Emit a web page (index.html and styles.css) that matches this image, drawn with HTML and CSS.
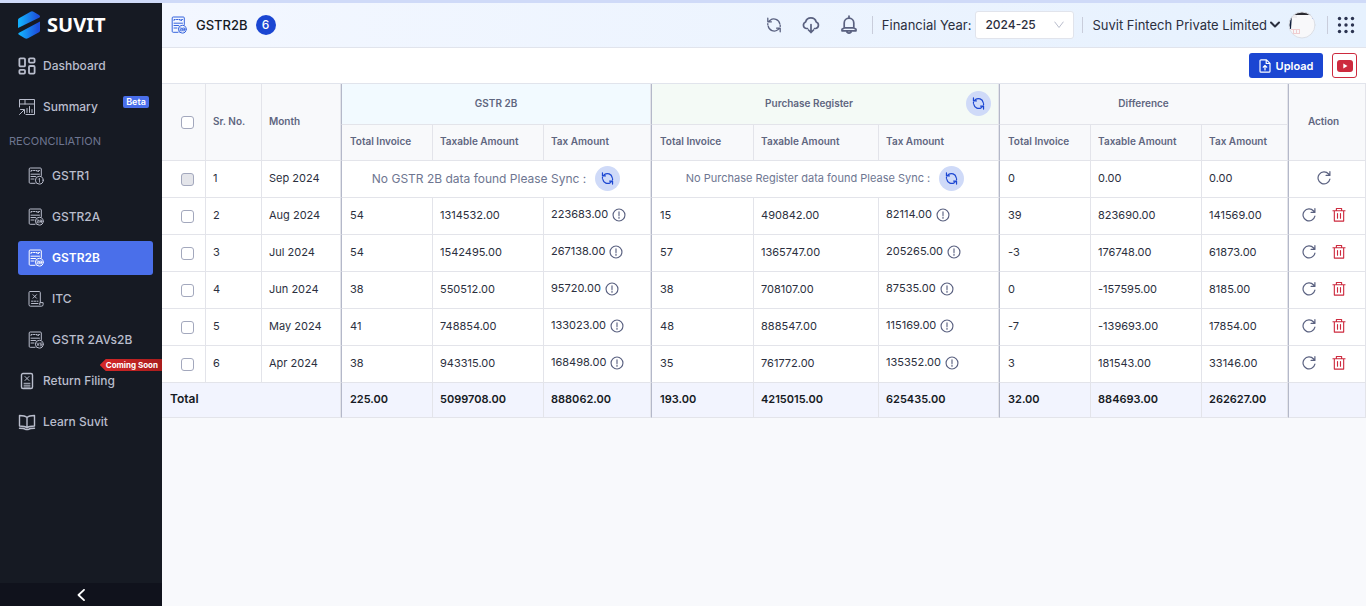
FILE: index.html
```html
<!DOCTYPE html>
<html lang="en">
<head>
  <meta charset="UTF-8">
  <meta name="viewport" content="width=device-width, initial-scale=1">
  <title>GSTR2B</title>
  <link rel="stylesheet" href="styles.css">
</head>
<body>
  <!-- shared icons -->
  <svg class="sprite" aria-hidden="true">
    <symbol id="i-sync" viewBox="0 0 16 16">
      <path d="M2.2 9.2a6 6 0 0 0 9.6 3.6l1.4-1.3M13.8 6.8A6 6 0 0 0 4.2 3.2L2.8 4.5M1.8 1.2v3.6h3.6M14.2 14.8v-3.6h-3.6M1.8 6.6v1.2M14.2 8.2v1.2"/>
    </symbol>
    <symbol id="i-reload" viewBox="1 1 14 14">
      <path d="M13.9 9.2A6 6 0 1 1 12.6 4l1 1.2M13.9 1.6v3.8h-3.8"/>
    </symbol>
    <symbol id="i-trash" viewBox="1 1 14 15">
      <path d="M1.5 4h13M3 4v11h10V4M5.2 4V1.6h5.6V4M6.4 7v5M9.6 7v5"/>
    </symbol>
    <symbol id="i-info" viewBox="0 0 16 16">
      <circle cx="8" cy="8" r="6.8"/>
      <path d="M8 4.4v4.2M8 10.3v1.5"/>
    </symbol>
    <symbol id="i-doc" viewBox="0 0 16 18">
      <path d="M7 16.300H2.200a1 1 0 0 1-1-1V2a1 1 0 0 1 1-1h10.100a1 1 0 0 1 1 1v6.500M3 4.500v-1h1.200M5.500 3.500h1.300M8 3.500h1.200v1M10.500 4.500v-1h1M3 7.200h8.500M3 9.500h4.500M3 12h3"/>
      <circle cx="11.300" cy="13.200" r="3.900"/>
    </symbol>
  </svg>

  <div class="topline"></div>
  <div class="app">
    <aside class="sidebar">
      <a class="logo" href="#">
        <svg width="22" height="28" viewBox="0 0 22 28" aria-hidden="true">
          <defs>
            <linearGradient id="logoFill" x1="0" x2="1">
              <stop offset="0.1" stop-color="#13aefb"/>
              <stop offset="0.9" stop-color="#1d4fdc"/>
            </linearGradient>
          </defs>
          <path fill="url(#logoFill)" d="M0 9q0-1.200 1-1.800L12.500.7q1.500-.8 3 0L21 3.900q1 .6 1 1.500 0 .7-1 1.300L0 17z"/>
          <path fill="url(#logoFill)" d="M22 10.500v9q0 1.200-1 1.800l-11 6q-1.600.9-3.200 0L1 23.700q-1.500-1 0-2z"/>
        </svg>
        <span>SUVIT</span>
      </a>
      <nav class="menu">
        <a class="item" href="#">
          <svg width="18" height="18" viewBox="0 0 18 18" stroke-width="1.8">
            <rect x="1.400" y="1.400" width="5.600" height="8" rx="1"/>
            <rect x="11" y="1.400" width="5.600" height="4.200" rx="1"/>
            <rect x="1.400" y="12.800" width="5.600" height="3.800" rx="1"/>
            <rect x="11" y="9" width="5.600" height="7.600" rx="1"/>
          </svg>
          Dashboard
        </a>
        <a class="item" href="#">
          <svg width="18" height="18" viewBox="0 0 18 18">
            <path d="M1.500 9V1.500h15v15H8M1.500 6h15M7 1.500V6M1.500 16.500 6 12M2.500 11.500H6.500v4M9 14.500v-4M11.500 14.500v-6M14 14.500v-3"/>
          </svg>
          Summary
          <span class="beta">Beta</span>
        </a>
        <h2>RECONCILIATION</h2>
        <a class="item sub" href="#">
          <svg class="doc" width="16" height="18"><use href="#i-doc"/><path d="m10.500 12.200 1-1v4"/></svg>
          GSTR1
        </a>
        <a class="item sub" href="#">
          <svg class="doc" width="16" height="18"><use href="#i-doc"/><path d="M9 12h1.600v1.300H9v1.500h1.800M12 14.800V12h1.600v2.800M12 13.500h1.600"/></svg>
          GSTR2A
        </a>
        <a class="item sub active" href="#">
          <svg class="doc" width="16" height="18"><use href="#i-doc"/><path d="M9 12h1.600v1.300H9v1.500h1.800M12 12h1.600v2.800H12zM12 13.400h1.600"/></svg>
          GSTR2B
        </a>
        <a class="item sub" href="#">
          <svg width="16" height="18" viewBox="0 0 16 18">
            <path d="M12.300 12V2.500a1 1 0 0 0-1-1H2a1 1 0 0 0-1 1v12.200A1.500 1.500 0 0 0 2.500 16.200h11a1.600 1.600 0 0 0 1.600-1.600v-2h-3.300v2M5 4.700l3.500 3.500M8.500 4.700 5 8.200M3.500 11.200h1.500M6.200 11.200h1.500M9 11.200h1M3.500 13.500h6.500"/>
          </svg>
          ITC
        </a>
        <a class="item sub" href="#">
          <svg class="doc" width="16" height="18"><use href="#i-doc"/><path d="m9 12 1 2.800 1-2.800M13.800 12h-1.600v1.400h1.600v1.400h-1.700"/></svg>
          GSTR 2AVs2B
        </a>
        <a class="item" href="#">
          <svg width="18" height="18" viewBox="0 0 18 18">
            <rect x="3.500" y="1.500" width="11" height="15" rx="1.500" stroke-width="1.400"/>
            <path d="m7 4.500 4 4M11 4.500l-4 4M6 11.300h6M6 13.200h6M6 15h6"/>
          </svg>
          Return Filing
          <span class="soon">Coming Soon</span>
        </a>
        <a class="item" href="#">
          <svg width="18" height="18" viewBox="0 0 18 18" stroke-width="1.400">
            <path d="M9 4.500C7.500 3 5.500 2.500 1.500 2.500v10.500c4 0 6 .5 7.500 1.800 1.500-1.300 3.500-1.800 7.500-1.800V2.500c-4 0-6 .5-7.500 2zM9 4.500v10.300M1.500 15.200c3.500 0 5 .3 6.200 1.300h2.600c1.200-1 2.700-1.300 6.200-1.300"/>
          </svg>
          Learn Suvit
        </a>
      </nav>
      <button class="collapse" aria-label="Collapse menu">
        <svg width="8" height="12" viewBox="0 0 8 12" stroke-width="1.800"><path d="M7 .8 1.500 6 7 11.200"/></svg>
      </button>
    </aside>

    <main>
      <header>
        <svg class="doc title-icon" width="16" height="18"><use href="#i-doc"/><path d="M9 12h1.600v1.300H9v1.500h1.800M12 12h1.600v2.800H12zM12 13.400h1.600"/></svg>
        <h1>GSTR2B</h1>
        <span class="count">6</span>

        <div class="tools">
          <button class="tool" aria-label="Sync"><svg width="16" height="16" stroke-width="1.300"><use href="#i-sync"/></svg></button>
          <button class="tool" aria-label="Downloads">
            <svg width="18" height="18" viewBox="0 0 18 18" stroke-width="1.700">
              <path d="M5.500 12.500H4.200A3.400 3.400 0 0 1 3.600 6 5.500 5.500 0 0 1 14.200 6a3.400 3.400 0 0 1-.4 6.500h-1.300M9 8.500v8M6.500 14 9 16.500 11.500 14"/>
            </svg>
          </button>
          <button class="tool" aria-label="Notifications">
            <svg width="18" height="20" viewBox="0 0 18 20" stroke-width="1.700">
              <path d="M9 1v2M4.200 13V8a4.800 4.800 0 0 1 9.600 0v5l2.200 1.200v1.600H2v-1.600zM4 12.800h10M7 17.200q2 2 4 0"/>
            </svg>
          </button>
        </div>
        <div class="year">
          <label for="year">Financial Year:</label>
          <div class="select">
            <select id="year"><option>2024-25</option></select>
            <svg width="10" height="8" viewBox="0 0 10 8"><path d="m.8 1 4.200 5.500L9.200 1"/></svg>
          </div>
        </div>
        <button class="account">
          Suvit Fintech Private Limited
          <svg width="10" height="8" viewBox="0 0 10 8" stroke-width="2"><path d="m1 1.500 4 4 4-4"/></svg>
        </button>
        <svg class="avatar" width="28" height="28" viewBox="0 0 28 28" role="img" aria-label="Profile">
          <clipPath id="round"><circle cx="14" cy="14" r="13"/></clipPath>
          <g clip-path="url(#round)" stroke="none">
            <path fill="#f8f8fa" d="M0 0h28v28H0z"/>
            <path fill="#2a2930" d="M0 0h28v4H0z"/>
            <path fill="#12203c" d="M0 4h4l-1 14H0z"/>
            <path fill="#eeecef" d="M4 4h5v3H4z"/>
            <path fill="#f0cdd0" d="M3 18h9v1H3zM3 22h9v1H3zM5 19h1v3H5zM8 19h1v3H8zM11 19h1v3h-1z"/>
            <path fill="#8fa3ef" d="M24 7h1v1h-1z"/>
          </g>
          <circle cx="14" cy="14" r="13" stroke="#dcdfe6" stroke-width="1"/>
        </svg>
        <button class="apps" aria-label="Apps">
          <svg width="18" height="18" viewBox="0 0 18 18">
            <g><circle cx="2.500" cy="2.500" r="1.700"/><circle cx="9" cy="2.500" r="1.700"/><circle cx="15.500" cy="2.500" r="1.700"/>
            <circle cx="2.500" cy="9" r="1.700"/><circle cx="9" cy="9" r="1.700"/><circle cx="15.500" cy="9" r="1.700"/>
            <circle cx="2.500" cy="15.500" r="1.700"/><circle cx="9" cy="15.500" r="1.700"/><circle cx="15.500" cy="15.500" r="1.700"/></g>
          </svg>
        </button>
      </header>

      <div class="actions">
        <button class="upload">
          <svg width="12" height="14" viewBox="0 0 12 14" stroke-width="1.200"><path d="M7.500.8H2a1 1 0 0 0-1 1v10.400a1 1 0 0 0 1 1h8a1 1 0 0 0 1-1V4.300zM7.200 1v3.500h3.600M6 6.500v4.500M4.200 8.200 6 6.500l1.800 1.700"/></svg>
          Upload
        </button>
        <button class="youtube" aria-label="Watch tutorial">
          <svg width="16" height="12" viewBox="0 0 16 12"><rect width="16" height="12" rx="3"/><path d="m6.300 3.500 4.200 2.500-4.200 2.500z"/></svg>
        </button>
      </div>

      <table>
        <colgroup>
          <col class="c-check"><col class="c-sr"><col class="c-month">
          <col class="c-invoice"><col class="c-taxable"><col class="c-tax">
          <col class="c-invoice-pr"><col class="c-taxable-pr"><col class="c-tax-pr">
          <col class="c-invoice"><col class="c-taxable"><col class="c-diff">
          <col class="c-action">
        </colgroup>
        <thead>
          <tr class="groups">
            <th rowspan="2" class="check"><input type="checkbox" aria-label="Select all"></th>
            <th rowspan="2">Sr. No.</th>
            <th rowspan="2">Month</th>
            <th colspan="3" class="start center blue">GSTR 2B</th>
            <th colspan="3" class="start center green">
              <div class="register">
                <span>Purchase Register</span>
                <button class="sync" aria-label="Sync purchase register"><svg width="13" height="13"><use href="#i-sync"/></svg></button>
              </div>
            </th>
            <th colspan="3" class="start center">Difference</th>
            <th rowspan="2" class="start center action">Action</th>
          </tr>
          <tr class="names">
            <th class="start">Total Invoice</th><th>Taxable Amount</th><th>Tax Amount</th>
            <th class="start">Total Invoice</th><th>Taxable Amount</th><th>Tax Amount</th>
            <th class="start">Total Invoice</th><th>Taxable Amount</th><th>Tax Amount</th>
          </tr>
        </thead>
        <tbody>
          <tr>
            <td class="check"><input type="checkbox" aria-label="Sep 2024" disabled></td>
            <td>1</td><td>Sep 2024</td>
            <td colspan="3" class="start center"><div class="empty wide">No GSTR 2B data found Please Sync :
              <button class="sync" aria-label="Sync GSTR 2B"><svg width="13" height="13"><use href="#i-sync"/></svg></button></div></td>
            <td colspan="3" class="start center"><div class="empty">No Purchase Register data found Please Sync :
              <button class="sync" aria-label="Sync purchase register"><svg width="13" height="13"><use href="#i-sync"/></svg></button></div></td>
            <td class="start">0</td><td>0.00</td><td>0.00</td>
            <td class="start action"><div class="ops"><button aria-label="Reload"><svg><use href="#i-reload"/></svg></button></div></td>
          </tr>
          <tr>
            <td class="check"><input type="checkbox" aria-label="Aug 2024"></td>
            <td>2</td><td>Aug 2024</td>
            <td class="start">54</td><td>1314532.00</td><td>223683.00 <svg class="info"><use href="#i-info"/></svg></td>
            <td class="start">15</td><td>490842.00</td><td>82114.00 <svg class="info"><use href="#i-info"/></svg></td>
            <td class="start">39</td><td>823690.00</td><td>141569.00</td>
            <td class="start action"><div class="ops"><button aria-label="Reload"><svg><use href="#i-reload"/></svg></button><button class="delete" aria-label="Delete"><svg><use href="#i-trash"/></svg></button></div></td>
          </tr>
          <tr>
            <td class="check"><input type="checkbox" aria-label="Jul 2024"></td>
            <td>3</td><td>Jul 2024</td>
            <td class="start">54</td><td>1542495.00</td><td>267138.00 <svg class="info"><use href="#i-info"/></svg></td>
            <td class="start">57</td><td>1365747.00</td><td>205265.00 <svg class="info"><use href="#i-info"/></svg></td>
            <td class="start">-3</td><td>176748.00</td><td>61873.00</td>
            <td class="start action"><div class="ops"><button aria-label="Reload"><svg><use href="#i-reload"/></svg></button><button class="delete" aria-label="Delete"><svg><use href="#i-trash"/></svg></button></div></td>
          </tr>
          <tr>
            <td class="check"><input type="checkbox" aria-label="Jun 2024"></td>
            <td>4</td><td>Jun 2024</td>
            <td class="start">38</td><td>550512.00</td><td>95720.00 <svg class="info"><use href="#i-info"/></svg></td>
            <td class="start">38</td><td>708107.00</td><td>87535.00 <svg class="info"><use href="#i-info"/></svg></td>
            <td class="start">0</td><td>-157595.00</td><td>8185.00</td>
            <td class="start action"><div class="ops"><button aria-label="Reload"><svg><use href="#i-reload"/></svg></button><button class="delete" aria-label="Delete"><svg><use href="#i-trash"/></svg></button></div></td>
          </tr>
          <tr>
            <td class="check"><input type="checkbox" aria-label="May 2024"></td>
            <td>5</td><td>May 2024</td>
            <td class="start">41</td><td>748854.00</td><td>133023.00 <svg class="info"><use href="#i-info"/></svg></td>
            <td class="start">48</td><td>888547.00</td><td>115169.00 <svg class="info"><use href="#i-info"/></svg></td>
            <td class="start">-7</td><td>-139693.00</td><td>17854.00</td>
            <td class="start action"><div class="ops"><button aria-label="Reload"><svg><use href="#i-reload"/></svg></button><button class="delete" aria-label="Delete"><svg><use href="#i-trash"/></svg></button></div></td>
          </tr>
          <tr>
            <td class="check"><input type="checkbox" aria-label="Apr 2024"></td>
            <td>6</td><td>Apr 2024</td>
            <td class="start">38</td><td>943315.00</td><td>168498.00 <svg class="info"><use href="#i-info"/></svg></td>
            <td class="start">35</td><td>761772.00</td><td>135352.00 <svg class="info"><use href="#i-info"/></svg></td>
            <td class="start">3</td><td>181543.00</td><td>33146.00</td>
            <td class="start action"><div class="ops"><button aria-label="Reload"><svg><use href="#i-reload"/></svg></button><button class="delete" aria-label="Delete"><svg><use href="#i-trash"/></svg></button></div></td>
          </tr>
        </tbody>
        <tfoot>
          <tr>
            <th colspan="3">Total</th>
            <td class="start">225.00</td><td>5099708.00</td><td>888062.00</td>
            <td class="start">193.00</td><td>4215015.00</td><td>625435.00</td>
            <td class="start">32.00</td><td>884693.00</td><td>262627.00</td>
            <td class="start"></td>
          </tr>
        </tfoot>
      </table>
    </main>
  </div>
</body>
</html>
```
FILE: styles.css
```css
* {
  box-sizing: border-box;
}

body {
  margin: 0;
  min-height: 100vh;
  display: flex;
  flex-direction: column;
  font-family: Inter, "Liberation Sans", sans-serif;
  font-size: 12px;
  color: #2b2f3e;
  background: #f8f9fc;
}

button {
  font: inherit;
  color: inherit;
  background: none;
  border: 0;
  padding: 0;
  cursor: pointer;
}

svg {
  flex: none;
  fill: none;
  stroke: currentColor;
  stroke-linecap: round;
  stroke-linejoin: round;
}

.sprite {
  position: absolute;
  width: 0;
  height: 0;
}

.doc path {
  stroke-width: 0.8;
}

.topline {
  height: 3px;
  background: #cfdaf8;
}

.app {
  flex: 1;
  display: flex;
}

/* sidebar */
.sidebar {
  width: 162px;
  flex: none;
  display: flex;
  flex-direction: column;
  background: #161a23;
  color: #b9bdcc;
}

.logo {
  display: flex;
  align-items: center;
  gap: 7px;
  height: 43px;
  padding-left: 18px;
  color: #fff;
  font: 700 20px "Noto Sans", sans-serif;
  text-decoration: none;
}

.logo svg {
  stroke: none;
}

.menu {
  flex: 1;
  display: flex;
  flex-direction: column;
  gap: 7px;
  padding-top: 3px;
}

.menu h2 {
  margin: -7px 0;
  padding-left: 9px;
  font-size: 11px;
  font-weight: 400;
  line-height: 35px;
  color: #6e7691;
}

.item {
  position: relative;
  display: flex;
  align-items: center;
  gap: 7px;
  height: 34px;
  padding: 0 0 1px 18px;
  font-size: 12px;
  font-weight: 500;
  color: inherit;
  text-decoration: none;
}

.sub {
  gap: 8px;
  margin: 0 9px 0 18px;
  padding-left: 10px;
  border-radius: 3px;
}

.active {
  background: #4a6fea;
  color: #fff;
  font-weight: 600;
}

.beta {
  position: absolute;
  top: 6px;
  right: 13px;
  width: 26px;
  border-radius: 2px;
  background: #4a6fea;
  color: #fff;
  font-size: 9px;
  font-weight: 600;
  line-height: 12px;
  text-align: center;
}

.soon {
  position: absolute;
  top: -5px;
  right: 0;
  padding: 0 4px 0 6px;
  background: linear-gradient(90deg, #d62828, #a81d1d);
  clip-path: polygon(0 50%, 6px 0, 100% 0, 100% 100%, 6px 100%);
  color: #fff;
  font-size: 8px;
  font-weight: 700;
  line-height: 12px;
}

.collapse {
  height: 23px;
  display: flex;
  align-items: center;
  justify-content: center;
  background: #10121c;
  color: #fff;
}

/* top bar */
main {
  flex: 1;
  min-width: 0;
}

header {
  display: flex;
  align-items: center;
  height: 45px;
  padding: 0 11px 1px 9px;
  border-bottom: 1px solid #e1e4ec;
  background: linear-gradient(90deg, #f3f7ff, #e6f1fe);
  font-size: 13px;
}

.title-icon {
  color: #3563dd;
}

h1 {
  margin: 0 8px 0 9px;
  font-size: 13px;
  font-weight: 500;
  color: #161a23;
}

.count {
  width: 20px;
  border-radius: 50%;
  background: #1b46d2;
  color: #fff;
  font-size: 12px;
  font-weight: 500;
  line-height: 20px;
  text-align: center;
}

.tools {
  display: flex;
  align-items: center;
  gap: 20px;
  margin-left: auto;
  padding-right: 14px;
  color: #5a6180;
}

.tool,
.apps,
.account,
.upload,
.youtube,
.sync,
.ops button {
  display: flex;
  align-items: center;
  justify-content: center;
}

.year,
.account,
.apps {
  padding-left: 10px;
  background: linear-gradient(#c9cddb, #c9cddb) left center / 1px 18px no-repeat;
}

.year {
  display: flex;
  align-items: center;
  gap: 4px;
}

.select {
  position: relative;
}

.select select {
  appearance: none;
  width: 99px;
  height: 28px;
  padding: 0 9px;
  border: 1px solid #e1e4ec;
  border-radius: 3px;
  background: #fff;
  color: #2b2f3e;
  font: 500 12px Inter, sans-serif;
}

.select svg {
  position: absolute;
  top: 10px;
  right: 10px;
  color: #b9bdcc;
}

.account {
  gap: 3px;
  margin-left: 8px;
}

.avatar {
  margin: 0 11px 0 8px;
}

.apps svg {
  fill: #2b3350;
  stroke: none;
}

.actions {
  display: flex;
  align-items: center;
  justify-content: flex-end;
  gap: 9px;
  height: 36px;
  padding-right: 9px;
  border-bottom: 1px solid #e1e4ec;
  background: #fff;
}

.upload {
  gap: 5px;
  width: 74px;
  height: 25px;
  border-radius: 3px;
  background: #1b46d2;
  color: #fff;
  font-size: 11px;
  font-weight: 600;
}

.youtube {
  width: 25px;
  height: 25px;
  border: 1px solid #cd2a3e;
  border-radius: 3px;
  background: #fff;
}

.youtube svg {
  fill: #cd2a3e;
  stroke: none;
}

.youtube path {
  fill: #fff;
}

/* table */
table {
  width: 100%;
  table-layout: fixed;
  border-collapse: separate;
  border-spacing: 0;
  background: #fff;
  font-size: 11px;
}

.c-check { width: 44px; }
.c-sr { width: 56px; }
.c-month { width: 79px; }
.c-invoice { width: 92px; }
.c-taxable { width: 111px; }
.c-tax { width: 107px; }
.c-invoice-pr { width: 103px; }
.c-taxable-pr { width: 125px; }
.c-tax-pr { width: 120px; }
.c-diff { width: 86px; }
.c-action { width: 78px; }

th,
td {
  height: 37px;
  padding: 0 0 3px 7px;
  border-right: 1px solid #e3e4ea;
  border-bottom: 1px solid #e3e4ea;
  text-align: left;
  white-space: nowrap;
}

.start {
  padding-left: 8px;
  border-left: 1px solid #b4b8c9;
}

.center {
  padding: 0 0 2px;
  text-align: center;
}

thead th {
  background: #f8f9fb;
  color: #5f6680;
  font-size: 10px;
  font-weight: 600;
}

.groups th {
  height: 41px;
}

.names th {
  height: 36px;
}

thead .blue {
  background: #f2faff;
}

thead .green {
  background: #f4faf6;
}

.check {
  padding: 0 0 0 19px;
}

.action {
  padding: 0 7px 2px 0;
}

input[type="checkbox"] {
  appearance: none;
  display: block;
  width: 13px;
  height: 13px;
  margin: 0;
  border: 1px solid #a3a8bd;
  border-radius: 3px;
  background: #fff;
}

input[type="checkbox"]:disabled {
  background: #e4e5ea;
}

.sync {
  width: 25px;
  height: 25px;
  border-radius: 50%;
  background: #cfdaf8;
  color: #1b46d2;
}

.sync svg {
  stroke-width: 1.5;
}

.register {
  display: flex;
  align-items: center;
  padding-right: 7px;
}

.register span {
  flex: 1;
}

.empty {
  display: flex;
  align-items: center;
  justify-content: center;
  gap: 9px;
  color: #6e7691;
}

.wide {
  font-size: 12px;
}

.info {
  width: 14px;
  height: 14px;
  margin-left: 1px;
  vertical-align: -4px;
  color: #5a6180;
  stroke-width: 1.3;
}

.ops {
  display: flex;
  justify-content: center;
  gap: 16px;
  color: #5a6180;
}

.ops svg {
  width: 14px;
  height: 14px;
  stroke-width: 1.2;
}

.ops .delete {
  color: #cd2a3e;
}

tfoot th,
tfoot td {
  height: 35px;
  background: #f2f4fe;
  color: #161a23;
  font-weight: 600;
}

tfoot th {
  padding-left: 8px;
  font-size: 12px;
}
```
